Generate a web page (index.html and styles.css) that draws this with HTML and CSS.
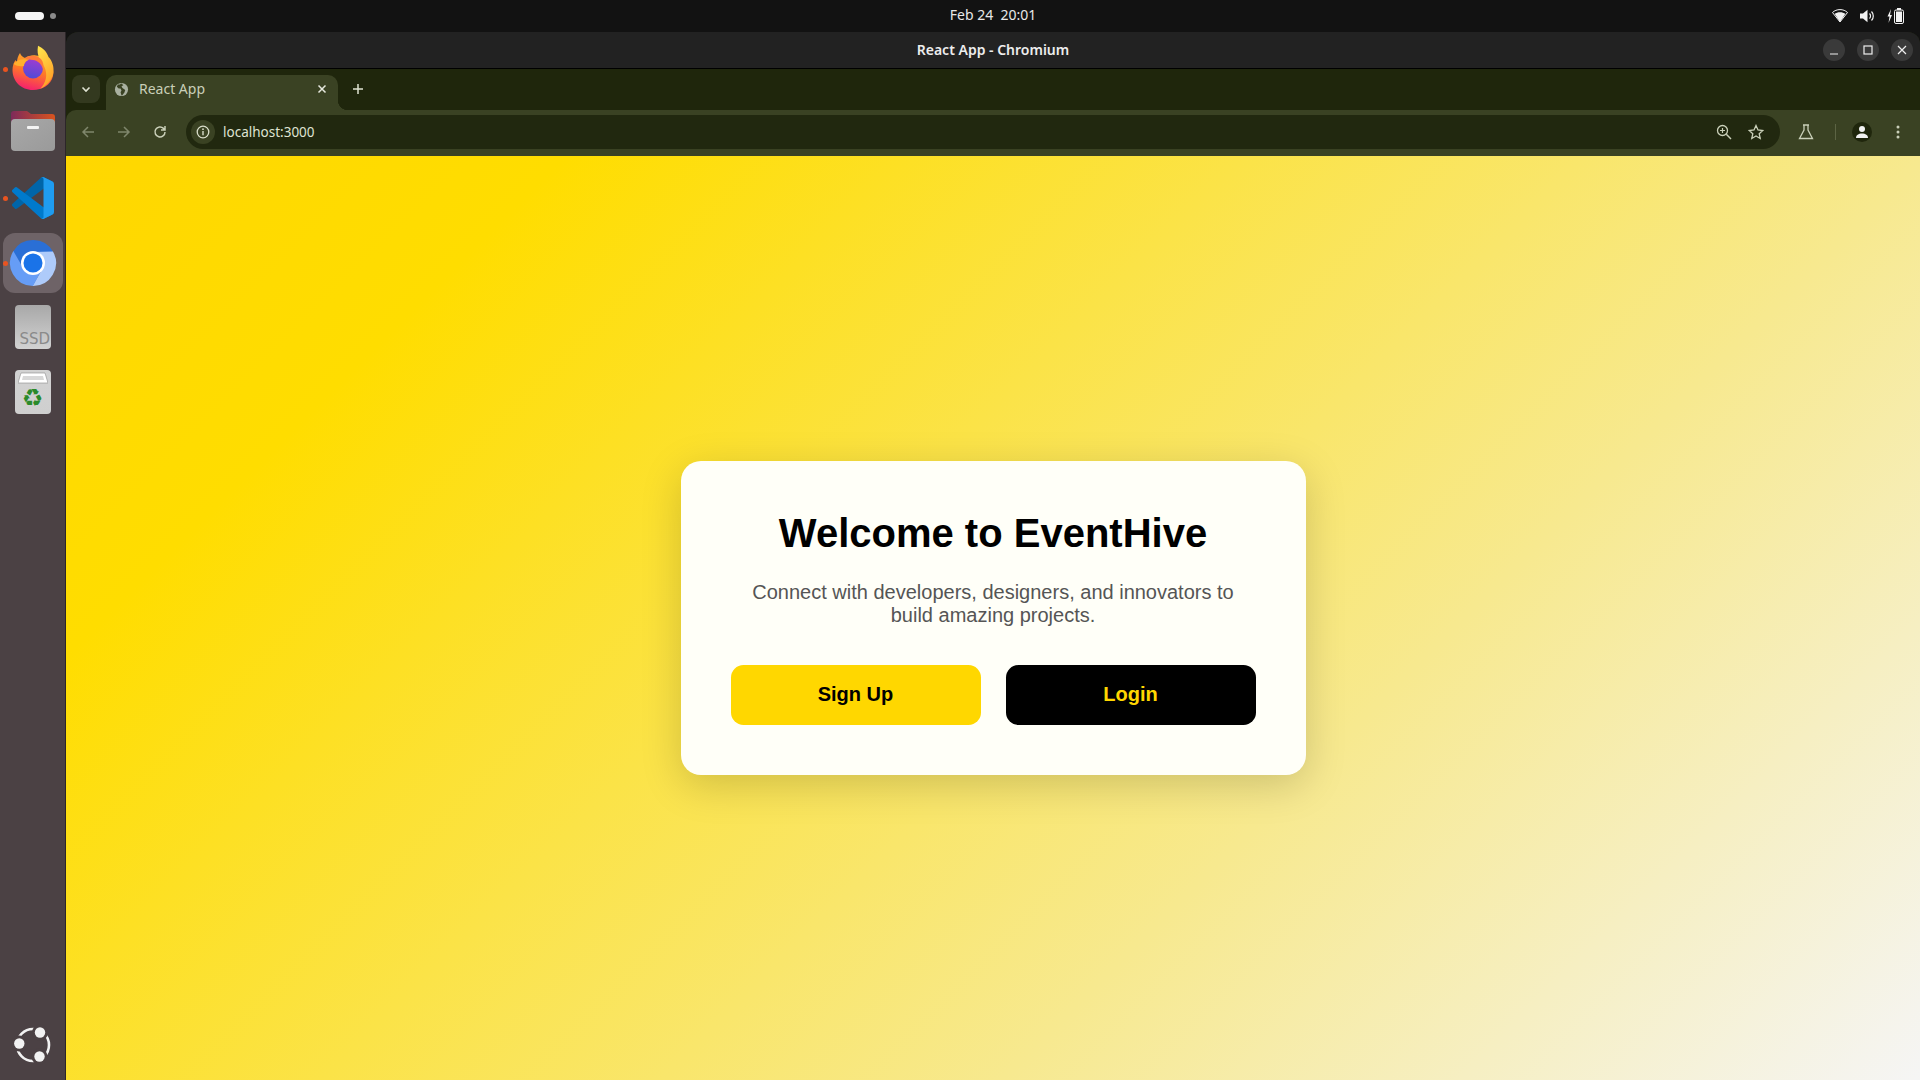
FILE: index.html
```html
<!DOCTYPE html>
<html lang="en">
<head>
    <meta charset="UTF-8">
    <meta name="viewport" content="width=device-width, initial-scale=1.0">
    <title>React App</title>
    <link rel="stylesheet" href="styles.css">
</head>
<body>
    <div class="topbar">
        <div class="workspaces"><span class="pill"></span><span class="ws-dot"></span></div>
        <div class="clock">Feb 24&nbsp;&nbsp;20:01</div>
        <div class="status">
            <svg width="16" height="14" viewBox="0 0 16 14"><path d="M0.5 3.5C2.5 1.6 5 .6 8 .6s5.5 1 7.5 2.9L8 13z" fill="none" stroke="#f2f2f2" stroke-width="1"/><path d="M2.6 4.8C4 3.8 5.900 3.200 8 3.200s4 .6 5.400 1.600L8 13z" fill="#f2f2f2"/></svg>
            <svg width="15" height="14" viewBox="0 0 15 14"><path d="M0 4.500h3L7.500 .8v12.400L3 9.500H0z" fill="#f2f2f2"/><path d="M9.500 4.500a3.500 3.500 0 0 1 0 5M11.500 2.500a6.500 6.500 0 0 1 0 9" fill="none" stroke="#f2f2f2" stroke-width="1.200"/></svg>
            <svg width="17" height="16" viewBox="0 0 17 16"><path d="M4 1 0.500 8.500h2L1.500 15 5 7H3z" fill="#f2f2f2"/><rect x="7.500" y="2" width="9" height="13.500" rx="1.500" fill="none" stroke="#f2f2f2"/><rect x="9" y="3.500" width="6" height="10.500" fill="#f2f2f2"/><rect x="10" y="0" width="4" height="2" fill="#f2f2f2"/></svg>
        </div>
    </div>

    <div class="desktop">
        <nav class="dock">
            <div class="dock-item running">
                <svg class="icon-firefox" width="46" height="46" viewBox="0 0 46 46">
                    <defs>
                        <linearGradient id="ffBody" x1="0.7" y1="0" x2="0.4" y2="1">
                            <stop offset="0" stop-color="#ffb52e"/>
                            <stop offset="0.5" stop-color="#ff7a26"/>
                            <stop offset="1" stop-color="#f5206e"/>
                        </linearGradient>
                        <linearGradient id="ffFlame" x1="0.3" y1="0" x2="0.7" y2="1">
                            <stop offset="0" stop-color="#ffe14a"/>
                            <stop offset="1" stop-color="#ff9a24"/>
                        </linearGradient>
                        <linearGradient id="ffGlobe" x1="0.6" y1="0" x2="0.4" y2="1">
                            <stop offset="0" stop-color="#a13bd0"/>
                            <stop offset="1" stop-color="#4f4bd8"/>
                        </linearGradient>
                    </defs>
                    <path d="M10 8c1 3 3 4 5 5 3-2 7-3 11-2.500C31 11 37 14 40 18c3 5 4 9 3 13-2 9-11 14-20 14C11 45 2.500 36 2.500 25c0-4 1-7 3-10 .5 1 1 1.500 1.500 2 0-3 1-6 3-9z" fill="url(#ffBody)"/>
                    <path d="M28 .7c5 2.500 9 6 10.500 11.300 4 4 5.500 10 5 15-1 8-7 14-13.500 17 6-6 8-14 4.500-22C31.500 16 26 12 28 .7z" fill="url(#ffFlame)"/>
                    <circle cx="23" cy="23.500" r="10" fill="url(#ffGlobe)"/>
                    <path d="M3.500 19C7 15 12 13 18 15c-3 1.500-4 3.500-4 6-4 .5-7.500 0-10.500-2z" fill="#ffb02e"/>
                    <path d="M15 13c5-3.500 12-3 16 1 2.500 3 3 7 2 10.500-1-5-5-9-10-9.500-3-.3-6 0-8-2z" fill="#ff7a3a"/>
                </svg>
            </div>
            <div class="dock-item">
                <svg class="icon-folder" width="46" height="42" viewBox="0 0 46 42">
                    <defs>
                        <linearGradient id="folderTop" x1="0" y1="0" x2="1" y2="0">
                            <stop offset="0" stop-color="#7e2a5a"/>
                            <stop offset="1" stop-color="#d9531e"/>
                        </linearGradient>
                        <linearGradient id="folderFace" x1="0" y1="0" x2="1" y2="1">
                            <stop offset="0" stop-color="#a8a8a8"/>
                            <stop offset="1" stop-color="#9a9a9a"/>
                        </linearGradient>
                    </defs>
                    <path d="M1 3a3 3 0 0 1 3-3h13l4 3h21a3 3 0 0 1 3 3v8H1z" fill="url(#folderTop)"/>
                    <rect x="1" y="8" width="44" height="32" rx="4" fill="url(#folderFace)"/>
                    <rect x="17" y="15" width="12" height="3" rx="1" fill="#f4f4f4"/>
                </svg>
            </div>
            <div class="dock-item running">
                <svg width="42" height="42" viewBox="0 0 100 100">
                    <path d="M96.460 10.800 75.860.870a6.230 6.230 0 0 0-7.110 1.210L1.320 63.560a4.160 4.160 0 0 0 0 6.160l5.510 5a4.170 4.170 0 0 0 5.320.240L93.400 14.300a4.130 4.130 0 0 1 6.600 3.290v-.240a6.250 6.250 0 0 0-3.540-5.550z" fill="#0065a9"/>
                    <path d="M96.460 89.200 75.860 99.130a6.230 6.230 0 0 1-7.110-1.210L1.320 36.440a4.160 4.160 0 0 1 0-6.160l5.510-5a4.170 4.170 0 0 1 5.320-.240L93.400 85.700a4.130 4.130 0 0 0 6.600-3.290v.240a6.250 6.250 0 0 1-3.540 5.550z" fill="#007acc"/>
                    <path d="M75.860 99.130a6.220 6.220 0 0 1-7.110-1.210c2.300 2.300 6.250.670 6.250-2.580V4.660c0-3.250-3.950-4.880-6.250-2.580a6.220 6.220 0 0 1 7.110-1.210l20.600 9.910A6.250 6.250 0 0 1 100 16.400v67.200a6.250 6.250 0 0 1-3.540 5.630z" fill="#1f9cf0"/>
                </svg>
            </div>
            <div class="dock-item running active">
                <span class="active-tile">
                    <svg width="48" height="48" viewBox="0 0 48 48">
                        <path d="M24 24 24 13H44.200A23 23 0 0 0 4.100 12.500L14.500 29.500z" fill="#2a6fd6"/>
                        <path d="M24 24 24 13H44.200A23 23 0 0 0 4.100 12.500L14.500 29.500z" fill="#aecbfa" transform="rotate(120 24 24)"/>
                        <path d="M24 24 24 13H44.200A23 23 0 0 0 4.100 12.500L14.500 29.500z" fill="#669df6" transform="rotate(240 24 24)"/>
                        <circle cx="24" cy="24" r="12" fill="#fff"/>
                        <circle cx="24" cy="24" r="9.500" fill="#1a73e8"/>
                    </svg>
                </span>
            </div>
            <div class="dock-item">
                <div class="drive"><span class="drive-label">SSD</span></div>
            </div>
            <div class="dock-item">
                <div class="drive trash">
                    <svg width="30" height="12" viewBox="0 0 30 12"><path d="M3 1H27L30 11H0z" fill="#fff" stroke="#8c8c8c" stroke-width="0.600"/><path d="M5 4H25L26 8H4z" fill="#d8d8d8"/></svg>
                    <span class="recycle">♻</span>
                </div>
            </div>
            <div class="dock-spacer"></div>
            <div class="dock-apps">
                <svg width="44" height="44" viewBox="0 0 44 44">
                    <circle cx="22" cy="22" r="16" fill="none" stroke="#f2f2f2" stroke-width="2.600"/>
                    <g fill="#4b4144">
                        <circle cx="29" cy="9.500" r="8"/>
                        <circle cx="8.300" cy="20.500" r="8"/>
                        <circle cx="28.500" cy="33.500" r="8"/>
                    </g>
                    <g fill="#f2f2f2">
                        <circle cx="29" cy="9.500" r="5.200"/>
                        <circle cx="8.300" cy="20.500" r="5.200"/>
                        <circle cx="28.500" cy="33.500" r="5.200"/>
                    </g>
                </svg>
            </div>
        </nav>

        <div class="window">
            <div class="titlebar">
                <div class="window-title">React App - Chromium</div>
                <div class="window-controls">
                    <button class="win-btn"><svg width="10" height="10" viewBox="0 0 10 10"><path d="M1 9h8" stroke="#eee" stroke-width="1.200"/></svg></button>
                    <button class="win-btn"><svg width="10" height="10" viewBox="0 0 10 10"><rect x="1" y="1" width="8" height="8" fill="none" stroke="#eee" stroke-width="1.200"/></svg></button>
                    <button class="win-btn"><svg width="10" height="10" viewBox="0 0 10 10"><path d="M1 1l8 8M9 1l-8 8" stroke="#eee" stroke-width="1.200"/></svg></button>
                </div>
            </div>

            <div class="tabstrip">
                <button class="tab-search"><svg width="12" height="12" viewBox="0 0 12 12"><path d="M2.500 4.500 6 8l3.500-3.500" fill="none" stroke="#dfe3d2" stroke-width="1.600"/></svg></button>
                <div class="tab">
                    <svg width="15" height="15" viewBox="0 0 16 16"><circle cx="8" cy="8" r="7" fill="#a9b0a0"/><path d="M8 1.500c-1 1-3 1-4 1.500L3 5l2 2 2 0 1 2-1 2 1 3.500c1 0 2-2 3-3l1-3-3-2-1-2 2-1z" fill="#3a4223"/></svg>
                    <span class="tab-title">React App</span>
                    <svg class="tab-close" width="10" height="10" viewBox="0 0 10 10"><path d="M1.500 1.500l7 7M8.500 1.500l-7 7" stroke="#e6e8de" stroke-width="1.500"/></svg>
                </div>
                <svg class="new-tab" width="12" height="12" viewBox="0 0 12 12"><path d="M6 1v10M1 6h10" stroke="#dfe3d2" stroke-width="1.500"/></svg>
            </div>

            <div class="toolbar">
                <svg class="nav-icon" width="14" height="14" viewBox="0 0 14 14"><path d="M13 7H2M7 2 2 7l5 5" fill="none" stroke="#7f866c" stroke-width="1.500"/></svg>
                <svg class="nav-icon" width="14" height="14" viewBox="0 0 14 14"><path d="M1 7h11M7 2l5 5-5 5" fill="none" stroke="#7f866c" stroke-width="1.500"/></svg>
                <svg class="nav-icon" width="14" height="14" viewBox="0 0 14 14"><path d="M12 7a5 5 0 1 1-1.500-3.600L12 5M12 1v4H8" fill="none" stroke="#c9cfb8" stroke-width="1.500"/></svg>
                <div class="omnibox">
                    <span class="site-info"><svg width="14" height="14" viewBox="0 0 14 14"><circle cx="7" cy="7" r="5.800" fill="none" stroke="#d9ddca" stroke-width="1.300"/><path d="M7 6v4.200" stroke="#d9ddca" stroke-width="1.400"/><circle cx="7" cy="4.200" r="0.900" fill="#d9ddca"/></svg></span>
                    <span class="url">localhost:3000</span>
                    <svg class="omni-icon" width="16" height="16" viewBox="0 0 16 16"><circle cx="6.500" cy="6.500" r="5" fill="none" stroke="#c9cfb8" stroke-width="1.300"/><path d="M10.300 10.300 15 15" stroke="#c9cfb8" stroke-width="1.500"/><path d="M6.500 4v5M4 6.500h5" stroke="#c9cfb8" stroke-width="1.200"/></svg>
                    <svg class="omni-icon" width="16" height="16" viewBox="0 0 16 16"><path d="M8 1.500 10 6l4.800.5-3.600 3.200 1 4.800L8 12l-4.200 2.500 1-4.800L1.200 6.500 6 6z" fill="none" stroke="#c9cfb8" stroke-width="1.300"/></svg>
                </div>
                <svg class="flask" width="16" height="16" viewBox="0 0 16 16"><path d="M5 1h6M6 1v5L1.500 14.500h13L10 6V1" fill="none" stroke="#c9cfb8" stroke-width="1.300"/></svg>
                <span class="toolbar-sep"></span>
                <span class="avatar"><svg width="14" height="14" viewBox="0 0 14 14"><circle cx="7" cy="4" r="3" fill="#f2f2f2"/><path d="M1 13c0-3 2.500-4.500 6-4.500s6 1.500 6 4.500z" fill="#f2f2f2"/></svg></span>
                <svg class="menu-dots" width="4" height="14" viewBox="0 0 4 14"><circle cx="2" cy="2" r="1.500" fill="#c9cfb8"/><circle cx="2" cy="7" r="1.500" fill="#c9cfb8"/><circle cx="2" cy="12" r="1.500" fill="#c9cfb8"/></svg>
            </div>

            <main class="page">
                <div class="card">
                    <h1>Welcome to EventHive</h1>
                    <p>Connect with developers, designers, and innovators to build amazing projects.</p>
                    <div class="actions">
                        <button class="btn btn-signup">Sign Up</button>
                        <button class="btn btn-login">Login</button>
                    </div>
                </div>
            </main>
        </div>
    </div>
</body>
</html>
```

FILE: styles.css
```css
* {
    box-sizing: border-box;
}
html, body {
    height: 100%;
}
body {
    margin: 0;
    display: flex;
    flex-direction: column;
    overflow: hidden;
    background: #121212;
    font-family: "Noto Sans", sans-serif;
}
button {
    font-family: inherit;
    border: none;
    padding: 0;
}

/* ubuntu top bar */
.topbar {
    height: 32px;
    flex: none;
    display: grid;
    grid-template-columns: 66px 1fr;
    align-items: center;
    background: #121212;
    color: #e8e8e8;
}
.workspaces {
    display: flex;
    align-items: center;
    gap: 6px;
    padding-left: 15px;
}
.pill {
    width: 29px;
    height: 8px;
    border-radius: 4px;
    background: #f5f5f5;
}
.ws-dot {
    width: 6px;
    height: 6px;
    border-radius: 50%;
    background: #8a8a8a;
}
.clock {
    grid-column: 2;
    grid-row: 1;
    justify-self: center;
    padding-bottom: 3px;
    font-size: 14px;
}
.status {
    grid-column: 2;
    grid-row: 1;
    justify-self: end;
    display: flex;
    align-items: center;
    gap: 12px;
    padding-right: 16px;
}

.desktop {
    flex: 1;
    display: flex;
    min-height: 0;
}

/* dock */
.dock {
    width: 66px;
    flex: none;
    display: flex;
    flex-direction: column;
    padding-top: 5px;
    background: #4b4144;
    border-right: 1px solid #2c2629;
}
.dock-item {
    position: relative;
    height: 64.500px;
    display: flex;
    align-items: center;
    justify-content: center;
}
.dock-item.running::before {
    content: "";
    position: absolute;
    left: 3px;
    top: 50%;
    width: 5px;
    height: 5px;
    margin-top: -2px;
    border-radius: 50%;
    background: #e95420;
}
.icon-firefox {
    margin-bottom: 3px;
}
.icon-folder {
    margin-bottom: 4px;
}
.active-tile {
    width: 60px;
    height: 60px;
    border-radius: 12px;
    background: #6e6367;
    display: flex;
    align-items: center;
    justify-content: center;
}
.dock-spacer {
    flex: 1;
}
.dock-apps {
    height: 57px;
    display: flex;
    justify-content: center;
}
.drive {
    width: 36px;
    height: 44px;
    border-radius: 4px;
    padding-left: 5px;
    background: linear-gradient(#a8a8a8, #d2d2d2);
    display: flex;
    align-items: flex-end;
    overflow: hidden;
}
.drive-label {
    font-size: 15px;
    line-height: 19px;
    color: #8a8a8a;
    font-family: "DejaVu Sans", sans-serif;
    white-space: nowrap;
}
.trash {
    padding: 2px 0 0 0;
    flex-direction: column;
    align-items: center;
    justify-content: flex-start;
    background: linear-gradient(#d2d2d2, #cfcfcf);
}
.recycle {
    margin-top: 1px;
    font-family: "DejaVu Sans", sans-serif;
    font-size: 24px;
    line-height: 27px;
    color: #2a8a2a;
}

/* browser window */
.window {
    flex: 1;
    min-width: 0;
    display: flex;
    flex-direction: column;
    background: #1f260c;
    border-radius: 12px 12px 0 0;
    overflow: hidden;
}
.titlebar {
    height: 37px;
    flex: none;
    display: grid;
    align-items: center;
    background: #222;
    border-bottom: 1px solid #000;
}
.window-title {
    grid-column: 1;
    grid-row: 1;
    justify-self: center;
    padding-bottom: 2px;
    font-size: 14px;
    font-weight: 600;
    color: #ededed;
}
.window-controls {
    grid-column: 1;
    grid-row: 1;
    justify-self: end;
    display: flex;
    gap: 12px;
    padding-right: 7px;
}
.win-btn {
    width: 22px;
    height: 22px;
    border-radius: 50%;
    background: #3a3a3a;
    display: flex;
    align-items: center;
    justify-content: center;
}

.tabstrip {
    height: 41px;
    flex: none;
    display: flex;
    align-items: flex-end;
    padding-left: 6px;
    background: #1f260c;
}
.tab-search {
    width: 28px;
    height: 28px;
    margin-bottom: 7px;
    border-radius: 8px;
    background: #33391f;
    display: flex;
    align-items: center;
    justify-content: center;
}
.tab {
    position: relative;
    width: 232px;
    height: 35px;
    margin-left: 6px;
    padding: 0 11px 7px 8px;
    display: flex;
    align-items: center;
    gap: 10px;
    background: #3a4223;
    border-radius: 10px 10px 0 0;
}
.tab::after {
    content: "";
    position: absolute;
    right: -10px;
    bottom: 0;
    width: 10px;
    height: 10px;
    background: radial-gradient(circle at 100% 0, transparent 10px, #3a4223 10.500px);
}
.tab-title {
    flex: 1;
    padding-bottom: 2px;
    font-size: 14px;
    color: #c9cfb8;
}
.new-tab {
    margin: 0 0 15px 14px;
}

.toolbar {
    height: 46px;
    flex: none;
    display: flex;
    align-items: center;
    padding: 0 0 2px 15px;
    background: #3a4223;
    border-radius: 10px 0 0 0;
}
.nav-icon {
    margin-right: 22px;
}
.omnibox {
    width: 1594px;
    height: 34px;
    margin-left: -3px;
    padding: 0 0 0 5px;
    display: flex;
    align-items: center;
    border-radius: 17px;
    background: #21280f;
}
.site-info {
    width: 24px;
    height: 24px;
    border-radius: 50%;
    background: #3a4223;
    display: flex;
    align-items: center;
    justify-content: center;
}
.url {
    flex: 1;
    margin-left: 8px;
    padding-bottom: 1px;
    font-size: 13.500px;
    color: #dfe3d2;
}
.omni-icon {
    margin-right: 16px;
}
.flask {
    margin-left: 18px;
}
.toolbar-sep {
    width: 1px;
    height: 16px;
    margin: 0 16px 0 21px;
    background: #5c6444;
}
.avatar {
    width: 20px;
    height: 20px;
    border-radius: 50%;
    background: #1f260c;
    display: flex;
    align-items: center;
    justify-content: center;
}
.menu-dots {
    margin-left: 24px;
}

/* the react page */
.page {
    flex: 1;
    display: flex;
    align-items: center;
    justify-content: center;
    background: linear-gradient(135deg, #ffd700, #ffdd00 18%, #f7e98f 67%, #f5f5f5);
}
.card {
    width: 625px;
    padding: 49px 50px 50px;
    text-align: center;
    background: #fffff8;
    border-radius: 20px;
    box-shadow: 0 10px 40px rgba(0, 0, 0, 0.17);
    font-family: "Liberation Sans", Arial, sans-serif;
}
h1 {
    margin: 0 0 25px 0;
    font-size: 40px;
    line-height: 46px;
    color: #000;
}
p {
    margin: 0 0 38.500px 0;
    font-size: 20px;
    line-height: 23px;
    color: #555;
}
.actions {
    display: flex;
    gap: 25px;
}
.btn {
    flex: 1;
    height: 60px;
    padding-bottom: 2px;
    border-radius: 12.500px;
    font-family: inherit;
    font-size: 20px;
    font-weight: bold;
    cursor: pointer;
}
.btn-signup {
    background: #ffd700;
    color: #000;
}
.btn-login {
    background: #000;
    color: #ffd700;
}
```
